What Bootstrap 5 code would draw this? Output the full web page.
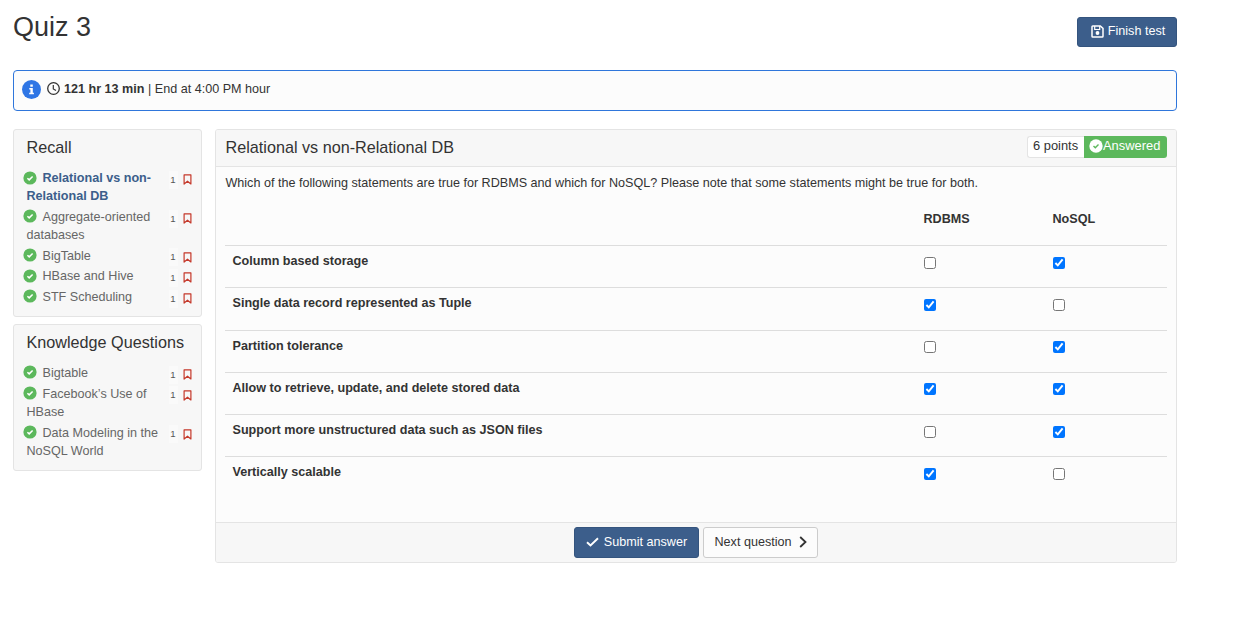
<!DOCTYPE html>
<html lang="en">
<head>
<meta charset="utf-8">
<meta name="viewport" content="width=device-width, initial-scale=1">
<title>Quiz 3</title>
<link href="https://cdn.jsdelivr.net/npm/bootstrap@5.3.0/dist/css/bootstrap.min.css" rel="stylesheet">
<style>
body{font-family:"Liberation Sans",Arial,sans-serif;font-size:12.6px;line-height:18px;color:#333;background:#fff}
.page{width:1164px;margin-left:13px;padding-top:9px}
.topbar{height:61px}
.quiz-title{font-size:27px;line-height:36px;margin:0;font-weight:400}
.btn{--bs-btn-font-size:12.6px;--bs-btn-line-height:18px;--bs-btn-padding-y:0;--bs-btn-padding-x:0;--bs-btn-border-radius:3px;height:31px;padding-bottom:2px;display:inline-flex;align-items:center;justify-content:center;white-space:nowrap}
.btn-main{--bs-btn-color:#fff;--bs-btn-bg:#3c5e8b;--bs-btn-border-color:#34547e;--bs-btn-hover-color:#fff;--bs-btn-hover-bg:#34547e}
.btn-next{--bs-btn-color:#333;--bs-btn-bg:#fcfcfc;--bs-btn-border-color:#ccc;--bs-btn-hover-bg:#eee}
.btn-finish{width:100px;height:30px;margin-top:8px;padding-left:2px}
.btn-submit{width:125px}.btn-following{width:115px}
.time-box{height:41px;border:1px solid #2f76db;border-radius:4px;background:#fcfcfc;padding:0 8px 4px;margin-bottom:18px}
.columns{gap:13px}
.side{width:189px;gap:7px}
.card{--bs-card-border-color:#e4e4e4;--bs-card-border-radius:3px;--bs-card-inner-border-radius:2px;--bs-card-bg:#f7f7f7;--bs-card-color:#333}
.side .card{padding:7px 8px 8.5px 12.5px}
.head-text{font-size:16.2px;line-height:20px;margin:0;font-weight:400}
.side .list-group{--bs-list-group-bg:transparent;margin-top:11px;border:0}
.side .list-group-item{padding:1.35px 0;border:0;color:#666;display:flex;justify-content:space-between;align-items:flex-start}
.side .list-group-item.current{font-weight:700;color:#3c5e8b}
.q-name{width:138px}
.q-name svg{margin:-3px 6px 0 -4px;vertical-align:middle}
.q-mark{font-size:9.6px;font-weight:400;color:#555;gap:5px;height:18px;padding-top:3px;padding-right:1.5px}
.q-mark span{background:#fafafa;width:9px;text-align:center}
.main-card{width:962px;height:434px;--bs-card-bg:#fcfcfc}
.main-card .card-header{height:37px;background:#f7f7f7;border-color:#e4e4e4;padding:0 9px 2px 9.5px}
.main-card .card-footer{height:40px;background:#f7f7f7;border-color:#e4e4e4;padding:4px 0 0;gap:4px}
.main-card .card-body{padding:7px 9px 0}
.question{margin-bottom:3.5px;padding-left:.4px}
.points,.state{height:22px;padding:0 5px 1px;font-size:12.9px;white-space:nowrap}
.points{border:1px solid #e4e4e4;border-right:0;background:#fff;border-radius:3px 0 0 3px;width:57px}
.state{background:#5cb85c;color:#fff;border-radius:0 3px 3px 0;width:83px}
.badge-line{margin-top:-1px}
.table{--bs-table-bg:transparent;--bs-table-color:#333;border-color:#ddd;table-layout:fixed;margin:0}
.table>:not(caption)>*>*{border-width:1px 0 0;padding:6px 7.5px 0;height:42.3px;vertical-align:top;font-weight:700}
.table>thead>tr>*{height:50px;padding-top:14px;border:0}
.table input{display:block;width:12px;height:12px;margin:4.5px 0 0;accent-color:#0075ff}
</style>
</head>
<body>
<svg class="d-none">
<symbol id="ok" viewBox="0 0 14 14"><circle cx="7" cy="7" r="6.6" fill="#5cb85c"/><path d="M4.4 7.2 6.2 8.9 9.6 5.5" fill="none" stroke="#fff" stroke-width="1.5"/></symbol>
<symbol id="flag" viewBox="0 0 9 11"><path d="M1.1.8h6.8v9.2L4.5 7.2 1.1 10z" fill="none" stroke="#c5392b" stroke-width="1.2" stroke-linejoin="round"/></symbol>
</svg>
<main class="page">
  <div class="topbar d-flex justify-content-between align-items-start">
    <h1 class="quiz-title">Quiz 3</h1>
    <button class="btn btn-main btn-finish"><svg class="me-1" width="13" height="13" viewBox="0 0 13 13"><path d="M1.800 1h7.500L12 3.400v7.800q0 .8-.8.8H1.800Q1 12 1 11.200V1.800Q1 1 1.800 1z" fill="none" stroke="#fff" stroke-width="1.500"/><path d="M3.700 1v3.500h5V1" fill="none" stroke="#fff" stroke-width="1.200"/><circle cx="6.500" cy="8" r="1.900" fill="#fff"/></svg>Finish test</button>
  </div>
  <div class="time-box d-flex align-items-center">
    <svg style="margin:2px 6px 0 0" width="19" height="19" viewBox="0 0 19 19"><circle cx="9.500" cy="9.500" r="9.500" fill="#2f76e5"/><path d="M8.300 4.600h2.500v2.200H8.300zM7.300 8h3.500v4.700h1.100v1.600H7.200v-1.600h1.200V9.600H7.300z" fill="#fff"/></svg>
    <svg style="margin-right:4px" width="13" height="13" viewBox="0 0 13 13" fill="none" stroke="#333"><circle cx="6.500" cy="6.500" r="5.800" stroke-width="1.300"/><path d="M6.300 3v4l2.700 1.600" stroke-width="1.200"/></svg>
    <span class="time-text"><b>121 hr 13 min</b> | End at 4:00 PM hour</span>
  </div>
  <div class="columns d-flex align-items-start">
    <aside class="side d-flex flex-column">
      <div class="card">
        <h2 class="head-text">Recall</h2>
        <ul class="list-group">
          <li class="list-group-item current"><span class="q-name"><svg width="14" height="14"><use href="#ok"/></svg>Relational vs non-Relational DB</span><span class="q-mark d-flex align-items-center"><span>1</span><svg width="9" height="11"><use href="#flag"/></svg></span></li>
          <li class="list-group-item"><span class="q-name"><svg width="14" height="14"><use href="#ok"/></svg>Aggregate-oriented databases</span><span class="q-mark d-flex align-items-center"><span>1</span><svg width="9" height="11"><use href="#flag"/></svg></span></li>
          <li class="list-group-item"><span class="q-name"><svg width="14" height="14"><use href="#ok"/></svg>BigTable</span><span class="q-mark d-flex align-items-center"><span>1</span><svg width="9" height="11"><use href="#flag"/></svg></span></li>
          <li class="list-group-item"><span class="q-name"><svg width="14" height="14"><use href="#ok"/></svg>HBase and Hive</span><span class="q-mark d-flex align-items-center"><span>1</span><svg width="9" height="11"><use href="#flag"/></svg></span></li>
          <li class="list-group-item"><span class="q-name"><svg width="14" height="14"><use href="#ok"/></svg>STF Scheduling</span><span class="q-mark d-flex align-items-center"><span>1</span><svg width="9" height="11"><use href="#flag"/></svg></span></li>
        </ul>
      </div>
      <div class="card">
        <h2 class="head-text">Knowledge Questions</h2>
        <ul class="list-group">
          <li class="list-group-item"><span class="q-name"><svg width="14" height="14"><use href="#ok"/></svg>Bigtable</span><span class="q-mark d-flex align-items-center"><span>1</span><svg width="9" height="11"><use href="#flag"/></svg></span></li>
          <li class="list-group-item"><span class="q-name"><svg width="14" height="14"><use href="#ok"/></svg>Facebook’s Use of HBase</span><span class="q-mark d-flex align-items-center"><span>1</span><svg width="9" height="11"><use href="#flag"/></svg></span></li>
          <li class="list-group-item"><span class="q-name"><svg width="14" height="14"><use href="#ok"/></svg>Data Modeling in the NoSQL World</span><span class="q-mark d-flex align-items-center"><span>1</span><svg width="9" height="11"><use href="#flag"/></svg></span></li>
        </ul>
      </div>
    </aside>
    <section class="card main-card">
      <div class="card-header d-flex align-items-center justify-content-between">
        <h2 class="head-text">Relational vs non-Relational DB</h2>
        <div class="badge-line d-flex">
          <span class="points d-flex align-items-center">6 points</span>
          <span class="state d-flex align-items-center"><svg width="14" height="14" viewBox="0 0 14 14"><circle cx="7" cy="7" r="6.700" fill="#fff"/><path d="M4.500 7.100 6.300 8.800 9.500 5.600" fill="none" stroke="#5cb85c" stroke-width="1.400"/></svg><span class="state-text">Answered</span></span>
        </div>
      </div>
      <div class="card-body">
        <p class="question">Which of the following statements are true for RDBMS and which for NoSQL? Please note that some statements might be true for both.</p>
        <table class="table">
          <colgroup><col><col style="width:129px"><col style="width:122px"></colgroup>
          <thead><tr><td></td><th>RDBMS</th><th>NoSQL</th></tr></thead>
          <tbody>
            <tr><td>Column based storage</td><td><input type="checkbox"></td><td><input type="checkbox" checked></td></tr>
            <tr><td>Single data record represented as Tuple</td><td><input type="checkbox" checked></td><td><input type="checkbox"></td></tr>
            <tr><td>Partition tolerance</td><td><input type="checkbox"></td><td><input type="checkbox" checked></td></tr>
            <tr><td>Allow to retrieve, update, and delete stored data</td><td><input type="checkbox" checked></td><td><input type="checkbox" checked></td></tr>
            <tr><td>Support more unstructured data such as JSON files</td><td><input type="checkbox"></td><td><input type="checkbox" checked></td></tr>
            <tr><td>Vertically scalable</td><td><input type="checkbox" checked></td><td><input type="checkbox"></td></tr>
          </tbody>
        </table>
      </div>
      <div class="card-footer d-flex justify-content-center">
        <button class="btn btn-main btn-submit"><svg style="margin-right:5px" width="13" height="10" viewBox="0 0 13 10"><path d="M1 5.200 4.500 8.500 12 1.200" fill="none" stroke="#fff" stroke-width="1.900"/></svg>Submit answer</button>
        <button class="btn btn-next btn-following">Next question<svg style="margin-left:7px" width="8" height="12" viewBox="0 0 8 12"><path d="M1.200 1 6.500 6 1.200 11" fill="none" stroke="#333" stroke-width="1.800"/></svg></button>
      </div>
    </section>
  </div>
</main>
<script src="https://cdn.jsdelivr.net/npm/bootstrap@5.3.0/dist/js/bootstrap.bundle.min.js"></script>
</body>
</html>
